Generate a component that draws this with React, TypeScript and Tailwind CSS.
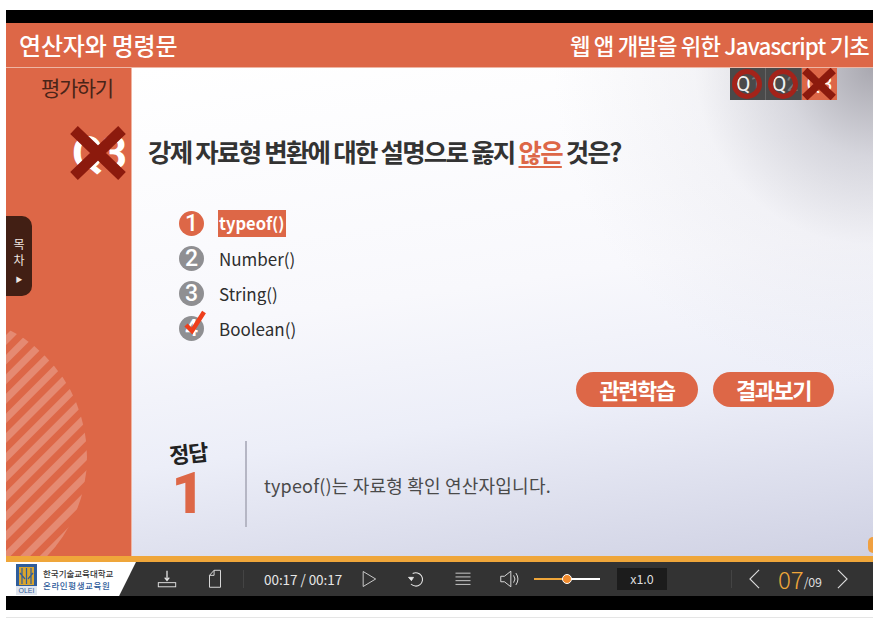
import { ReactNode } from "react";

const options = [
  { n: "1", label: "typeof()", active: true },
  { n: "2", label: "Number()" },
  { n: "3", label: "String()" },
  { n: "4", label: "Boolean()", checked: true },
];

function RedX({ className, weight = 10 }: { className: string; weight?: number }) {
  return (
    <svg viewBox="0 0 56 54" className={className}>
      <path d="M4 4 L52 50 M52 4 L4 50" stroke="#8c1a0d" strokeWidth={weight} fill="none" />
    </svg>
  );
}

function QBox({ label, sub }: { label: string; sub: string }) {
  return (
    <div className="relative flex h-[32px] w-[36px] items-center border-r border-[#666] bg-[#4a4a4a] pl-[6px] font-['Roboto',sans-serif] text-[21px] leading-none text-[#f0f0f0]">
      {label}
      <span className="text-[#7a7a7a]">{sub}</span>
      <span className="absolute left-[2px] top-[1px] h-[30px] w-[30px] rounded-full border-[5px] border-[#a3231a]" />
    </div>
  );
}

function CtlIcon({ children, className }: { children: ReactNode; className: string }) {
  return (
    <svg viewBox="0 0 24 24" fill="none" stroke="#e6e6e6" strokeWidth="1" className={className}>
      {children}
    </svg>
  );
}

export default function App() {
  return (
    <div className="h-[620px] w-[877px] overflow-hidden bg-white pl-[6px] pr-[4px] pt-[10px] font-['Noto_Sans_CJK_KR','Noto_Sans',sans-serif]">
      <div className="flex h-[600px] w-[867px] flex-col bg-black pt-[13px]">
        {/* title bar */}
        <div className="flex h-[45px] shrink-0 items-center justify-between border-b border-[#eeb6a4] bg-[#dd6747] pl-[13px] pr-[4px] text-white">
          <span className="text-[24px] font-medium leading-none tracking-[-0.2px]">연산자와 명령문</span>
          <span className="text-[22.3px] font-medium leading-none tracking-[-0.85px]">웹 앱 개발을 위한 Javascript 기초</span>
        </div>

        <div className="flex h-[488px] shrink-0">
          {/* sidebar */}
          <aside className="relative w-[126px] shrink-0 overflow-hidden border-r border-[#f0b5a2] bg-[#dd6747]">
            <div className="pl-[35px] pt-[4px] text-[21px] leading-[30px] tracking-[-1.4px] text-[#4a2418]">평가하기</div>
            <div className="absolute left-[64px] top-[58px] flex h-[54px] w-[56px] items-center justify-center font-['Roboto',sans-serif] text-[46px] font-bold tracking-[-3px] text-white">
              Q3
              <RedX className="absolute left-0 top-0 h-[54px] w-[56px]" weight={11} />
            </div>
            <div className="absolute left-0 top-[148px] flex h-[80px] w-[26px] flex-col items-center rounded-r-[10px] bg-[#421f14] pt-[20px] text-[12px] leading-[16px] text-[#f0e6e0]">
              <span>목</span>
              <span>차</span>
              <span className="mt-[3px] text-[7px]">▶</span>
            </div>
            <svg className="absolute left-0 top-[260px]" width="100" height="228" viewBox="0 0 100 228">
              <defs>
                <clipPath id="disc">
                  <circle cx="-62" cy="129" r="143" />
                </clipPath>
              </defs>
              <g clipPath="url(#disc)" stroke="#e58a72" strokeWidth="7">
                {Array.from({ length: 16 }).map((_, i) => (
                  <line key={i} x1="-10" y1={22 + i * 19.6} x2="150" y2={-138 + i * 19.6} />
                ))}
              </g>
            </svg>
          </aside>

          {/* question */}
          <main className="relative flex-1 overflow-hidden bg-[linear-gradient(172deg,#ffffff_0%,#f8f8fc_45%,#eceef8_68%,#cfd1e3_100%)]">
            <div className="absolute inset-0 bg-[radial-gradient(circle_at_100%_0%,#a9a8b0_0%,rgba(190,190,200,0.6)_10%,rgba(225,225,232,0.3)_20%,rgba(255,255,255,0)_36%)]" />
            <div className="relative flex h-full flex-col pl-[16px]">
              <div className="absolute right-[36px] top-0 flex h-[32px]">
                <QBox label="Q" sub="1" />
                <QBox label="Q" sub="2" />
                <div className="relative flex h-[32px] w-[35px] items-center justify-center bg-[#dd6747] font-['Roboto',sans-serif] text-[21px] leading-none text-white">
                  Q3
                  <RedX className="absolute left-0 top-0 h-[32px] w-[34px]" weight={13} />
                </div>
              </div>

              <h1 className="pt-[64px] text-[25.5px] font-bold leading-[38px] tracking-[-1.8px] text-[#333]">
                강제 자료형 변환에 대한 설명으로 옳지 <span className="text-[#dd6747] underline underline-offset-[4px]">않은</span> 것은?
              </h1>

              <ul className="ml-[31px] mt-[41px] flex flex-col gap-[10px]">
                {options.map((o) => (
                  <li key={o.n} className="flex h-[25px] items-center gap-[14px]">
                    <span className={`relative flex h-[25px] w-[25px] items-center justify-center rounded-full font-['Roboto',sans-serif] text-[23px] font-medium leading-none text-white ${o.active ? "bg-[#dd6747]" : "bg-[#8f8f92]"}`}>
                      {o.n}
                      {o.checked && (
                        <svg viewBox="0 0 24 24" className="absolute -top-[8px] left-[3px] h-[28px] w-[24px]">
                          <path d="M4 15 L10 21 L22 2" stroke="#ee3f1c" strokeWidth="4.5" fill="none" />
                        </svg>
                      )}
                    </span>
                    <span className={`px-px leading-[27px] ${o.active ? "bg-[#dd6747] text-[16.5px] font-semibold text-white" : "text-[17px] font-normal text-[#2e2e2e]"}`}>{o.label}</span>
                  </li>
                ))}
              </ul>

              <div className="mr-[39px] mt-[31px] flex justify-end gap-[15px]">
                <button className="flex h-[35px] w-[122px] items-center justify-center rounded-full bg-[#dd6747] text-[22px] font-bold tracking-[-1.5px] text-white">관련학습</button>
                <button className="flex h-[35px] w-[121px] items-center justify-center rounded-full bg-[#dd6747] text-[22px] font-bold tracking-[-1.5px] text-white">결과보기</button>
              </div>

              <div className="mt-[34px] flex">
                <div className="ml-[18px] -mt-[2px] flex w-[44px] flex-col items-center">
                  <span className="-rotate-6 text-[22px] font-bold leading-[26px] tracking-[-1px] text-[#222]">정답</span>
                  <span className="mt-[7px] font-['Roboto',sans-serif] text-[57px] font-black leading-[44px] text-[#dd6747]">1</span>
                </div>
                <div className="ml-[35px] h-[86px] w-[2px] bg-[#b5b6c4]" />
                <p className="ml-[17px] pt-[30px] text-[18px] leading-[28px] tracking-[0.2px] text-[#4a4a4a]">typeof()는 자료형 확인 연산자입니다.</p>
              </div>

              <span className="absolute bottom-[3px] right-0 h-[16px] w-[5px] rounded-l-full bg-[#f0a040]" />
            </div>
          </main>
        </div>

        {/* progress line */}
        <div className="h-[6px] shrink-0 bg-[#efa63a]" />

        {/* control bar */}
        <div className="flex h-[34px] shrink-0 items-center bg-[#333333] text-[#e6e6e6]">
          <div className="flex h-full w-[130px] shrink-0 items-center gap-[6px] bg-white pl-[10px] [clip-path:polygon(0_0,100%_0,87%_100%,0_100%)]">
            <div className="flex h-[31px] w-[21px] flex-col items-center justify-between bg-[#2f5d9b]">
              <svg viewBox="0 0 15 18" className="mt-[3px] h-[18px] w-[15px]">
                <rect width="15" height="18" fill="#d9a52e" />
                <path d="M3 1 V17 M7.500 1 V17 M12 1 V17 M1 6 L6 12 M14 6 L9 12" stroke="#2f5d9b" strokeWidth="1.2" fill="none" />
              </svg>
              <span className="w-full bg-[#dfe5ee] text-center font-['Liberation_Sans',sans-serif] text-[7px] leading-[9px] text-[#2f5d9b]">OLEI</span>
            </div>
            <div className="flex flex-col text-[8.5px] font-medium leading-[12px]">
              <span className="text-[#333]">한국기술교육대학교</span>
              <span className="tracking-[0.6px] text-[#2f5d9b]">온라인평생교육원</span>
            </div>
          </div>

          <CtlIcon className="ml-[20px] h-[22px] w-[22px] shrink-0">
            <path d="M12 3 V13 M9.500 10.500 L12 13.500 L14.500 10.500" strokeWidth="1.4" />
            <rect x="2.500" y="16" width="19" height="4.500" />
          </CtlIcon>
          <CtlIcon className="ml-[26px] h-[22px] w-[22px] shrink-0">
            <path d="M6 21 V8 L11 2.500 H18 V21 Z M6 8 H11 V2.500" />
          </CtlIcon>
          <div className="ml-[17px] h-[18px] w-px bg-[#444]" />
          <span className="ml-[20px] w-[84px] shrink-0 text-[13.5px] tracking-[-0.05px]">00:17 / 00:17</span>
          <CtlIcon className="ml-[11px] h-[20px] w-[20px] shrink-0">
            <path d="M5 3 L20 12 L5 21 Z" />
          </CtlIcon>
          <CtlIcon className="ml-[27px] h-[20px] w-[20px] shrink-0">
            <path d="M8 5.500 A8 8 0 1 1 6 18" strokeWidth="1.3" />
            <path d="M4 11 L10 11 L7.500 15 Z" fill="#e6e6e6" transform="translate(-1 -1)" />
          </CtlIcon>
          <CtlIcon className="ml-[27px] h-[20px] w-[20px] shrink-0">
            <path d="M3 5 H21 M3 9.500 H21 M3 14 H21 M3 18.500 H21" />
          </CtlIcon>
          <CtlIcon className="ml-[25px] h-[22px] w-[22px] shrink-0">
            <path d="M3 9 H7 L14 3.500 V20.500 L7 15 H3 Z M17 8 Q20 12 17 16 M19.500 5.500 Q24 12 19.500 18.500" />
          </CtlIcon>
          <div className="relative ml-[14px] h-[1.5px] w-[66px] shrink-0 bg-white">
            <div className="h-full w-[33px] bg-[#efa63a]" />
            <span className="absolute left-[28px] top-[-4px] h-[10px] w-[10px] rounded-full border-[1.5px] border-white bg-[#f08a2c]" />
          </div>
          <div className="ml-[17px] flex h-[22px] w-[50px] shrink-0 items-center justify-center bg-[#1c1c1c] text-[12.5px] text-[#ddd]">x1.0</div>
          <div className="ml-[64px] h-[18px] w-px bg-[#444]" />
          <svg viewBox="0 0 14 24" fill="none" stroke="#ddd" strokeWidth="1.2" className="ml-[16px] h-[22px] w-[13px] shrink-0">
            <path d="M12 2 L2 12 L12 22" />
          </svg>
          <span className="ml-[17px] text-[24px] font-light leading-none text-[#efa63a]">07</span>
          <span className="mt-[6px] text-[12.5px] leading-none tracking-[-0.3px] text-[#ddd]">/09</span>
          <svg viewBox="0 0 14 24" fill="none" stroke="#ddd" strokeWidth="1.2" className="ml-[14px] h-[22px] w-[13px] shrink-0">
            <path d="M2 2 L12 12 L2 22" />
          </svg>
        </div>

        <div className="h-[14px] shrink-0 bg-black" />
      </div>
      <div className="mt-[7px] h-px w-[867px] bg-[#e5e5e5]" />
    </div>
  );
}
